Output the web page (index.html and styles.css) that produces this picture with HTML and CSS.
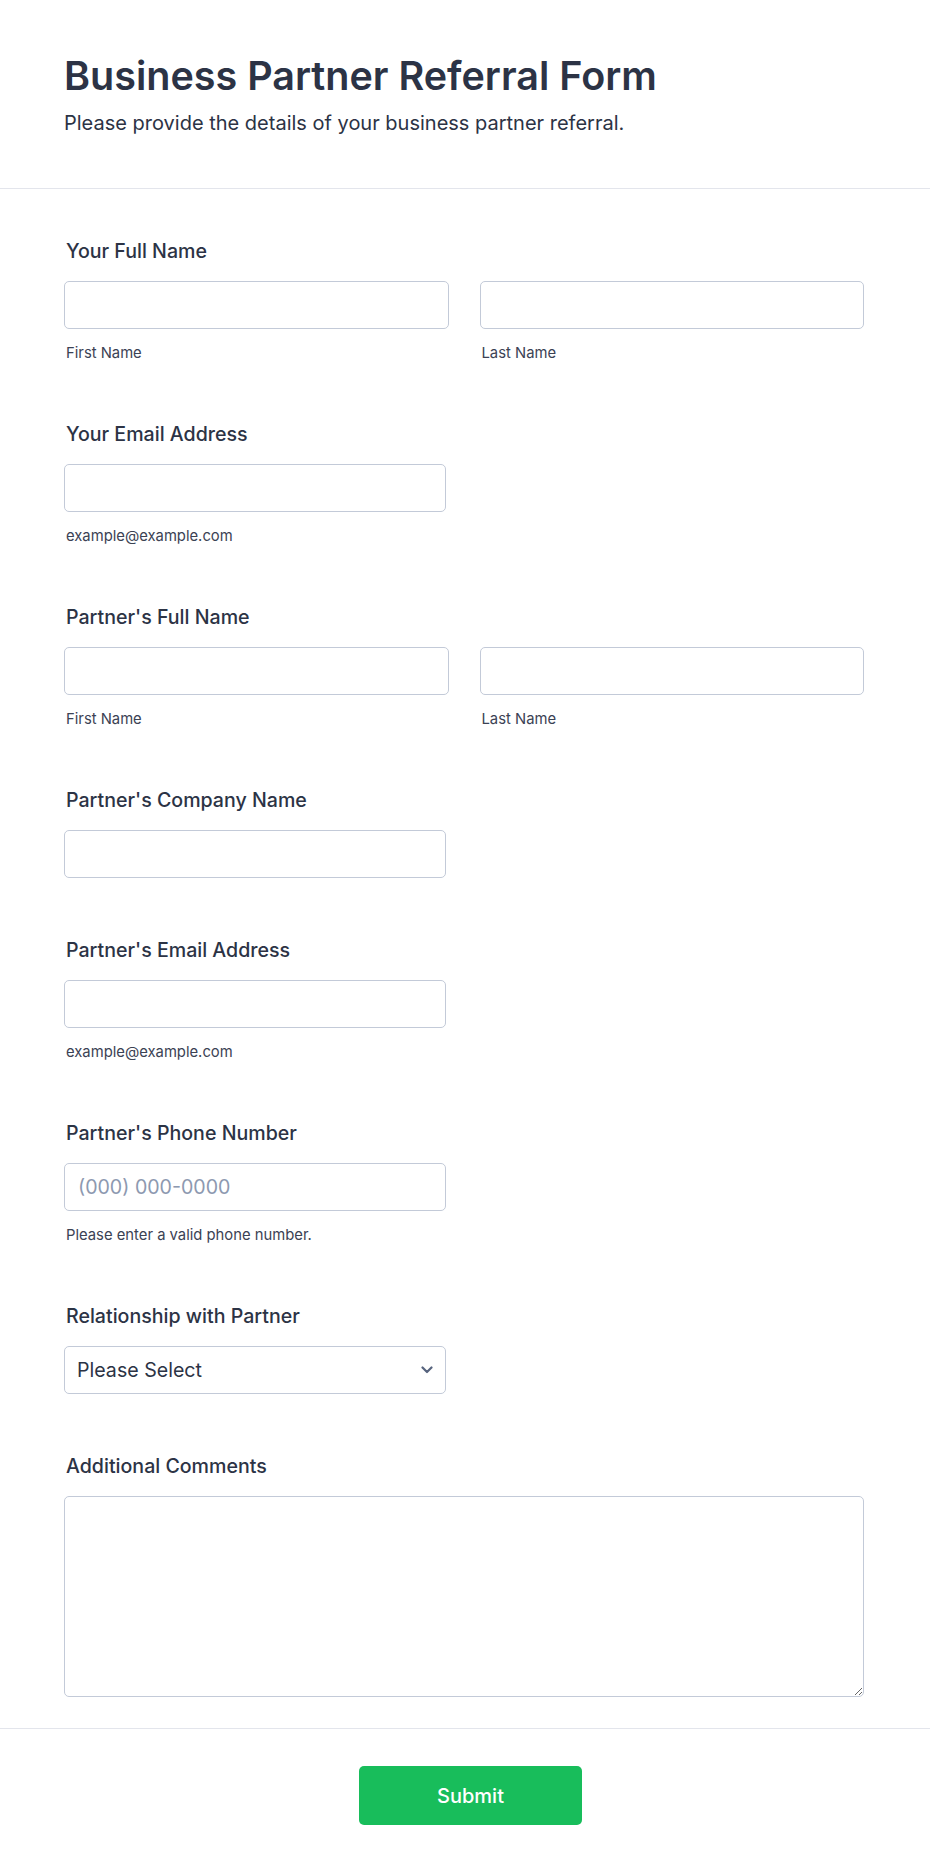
FILE: index.html
```html
<!DOCTYPE html>
<html lang="en">
<head>
<meta charset="utf-8">
<title>Business Partner Referral Form</title>
<link rel="stylesheet" href="styles.css">
</head>
<body>
<header class="form-header">
  <div class="wrap">
    <h1 class="form-title">Business Partner Referral Form</h1>
    <p class="form-subtitle">Please provide the details of your business partner referral.</p>
  </div>
</header>
<main class="form-body">
  <div class="wrap">
    <div class="field">
      <label class="field-label">Your Full Name</label>
      <div class="name-row">
        <div class="sub-field">
          <input class="input" type="text">
          <span class="sublabel">First Name</span>
        </div>
        <div class="sub-field">
          <input class="input" type="text">
          <span class="sublabel">Last Name</span>
        </div>
      </div>
    </div>

    <div class="field">
      <label class="field-label">Your Email Address</label>
      <div class="sub-field single">
        <input class="input" type="email">
        <span class="sublabel">example@example.com</span>
      </div>
    </div>

    <div class="field">
      <label class="field-label">Partner's Full Name</label>
      <div class="name-row">
        <div class="sub-field">
          <input class="input" type="text">
          <span class="sublabel">First Name</span>
        </div>
        <div class="sub-field">
          <input class="input" type="text">
          <span class="sublabel">Last Name</span>
        </div>
      </div>
    </div>

    <div class="field">
      <label class="field-label">Partner's Company Name</label>
      <div class="sub-field single">
        <input class="input" type="text">
      </div>
    </div>

    <div class="field">
      <label class="field-label">Partner's Email Address</label>
      <div class="sub-field single">
        <input class="input" type="email">
        <span class="sublabel">example@example.com</span>
      </div>
    </div>

    <div class="field">
      <label class="field-label">Partner's Phone Number</label>
      <div class="sub-field single">
        <input class="input" type="tel" placeholder="(000) 000-0000">
        <span class="sublabel">Please enter a valid phone number.</span>
      </div>
    </div>

    <div class="field">
      <label class="field-label">Relationship with Partner</label>
      <div class="select-wrap single">
        <select class="select">
          <option>Please Select</option>
        </select>
        <svg class="chevron" width="12" height="8" viewBox="0 0 12 8" aria-hidden="true">
          <path d="M1.5 1.5 L6 6 L10.5 1.5" fill="none" stroke="#57647e" stroke-width="2.2" stroke-linecap="round" stroke-linejoin="round"/>
        </svg>
      </div>
    </div>

    <div class="field">
      <label class="field-label">Additional Comments</label>
      <textarea class="textarea"></textarea>
    </div>
  </div>
</main>
<footer class="form-footer">
  <button class="submit" type="submit">Submit</button>
</footer>
</body>
</html>
```

FILE: styles.css
```css
html, body {
  margin: 0;
  padding: 0;
  background: #ffffff;
}

body {
  font-family: Inter, "Noto Sans", "Liberation Sans", sans-serif;
  color: #2c3345;
}

.wrap {
  width: 800px;
  margin-left: 64px;
}

.form-header {
  padding: 53px 0 53px;
  border-bottom: 1px solid #e3e5ec;
}

.form-title {
  margin: 0;
  font-size: 39.5px;
  line-height: 46px;
  font-weight: 600;
  color: #2c3345;
}

.form-subtitle {
  margin: 12px 0 0;
  font-size: 20px;
  line-height: 24px;
  font-weight: 400;
  color: #2c3345;
}

.form-body {
  padding: 20px 0 1px;
}

.field {
  padding: 30px 0;
}

.field-label {
  display: block;
  margin: 0 0 18px 2px;
  font-size: 19.6px;
  line-height: 24px;
  font-weight: 500;
  color: #2c3345;
}

.name-row {
  display: grid;
  grid-template-columns: 1fr 1fr;
  column-gap: 31px;
}

.sub-field {
  display: flex;
  flex-direction: column;
}

.single {
  width: 382px;
}

.input,
.select,
.textarea {
  box-sizing: border-box;
  width: 100%;
  border: 1px solid #c3cad8;
  border-radius: 5px;
  background: #ffffff;
  font-family: Inter, "Noto Sans", "Liberation Sans", sans-serif;
  font-size: 19.6px;
  color: #2c3345;
  outline: none;
}

.input {
  display: block;
  height: 48px;
  padding: 0 13px;
}

.input::placeholder {
  color: #8d99b0;
}

.sublabel {
  display: block;
  margin: 15px 0 0 2px;
  font-size: 14.8px;
  line-height: 18px;
  color: #3b4254;
}

.select-wrap {
  position: relative;
}

.select {
  display: block;
  height: 48px;
  padding: 0 40px 0 12px;
  appearance: none;
  -webkit-appearance: none;
}

.chevron {
  position: absolute;
  right: 13px;
  top: 20px;
  pointer-events: none;
}

.textarea {
  display: block;
  height: 201px;
  resize: vertical;
  padding: 12px 13px;
}

.form-footer {
  border-top: 1px solid #e3e5ec;
  padding: 37px 0 49px 11px;
  display: flex;
  justify-content: center;
}

.submit {
  width: 223px;
  height: 59px;
  border: none;
  border-radius: 5px;
  background: #18bd5b;
  color: #ffffff;
  font-family: Inter, "Noto Sans", "Liberation Sans", sans-serif;
  font-size: 20px;
  font-weight: 500;
  cursor: pointer;
}
```
